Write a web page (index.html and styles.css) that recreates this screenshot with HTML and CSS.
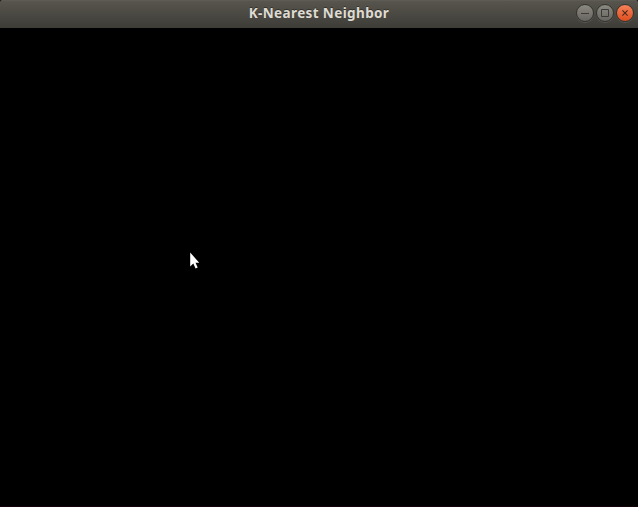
FILE: index.html
```html
<!DOCTYPE html>
<html lang="en">
<head>
<meta charset="utf-8">
<title>K-Nearest Neighbor</title>
<link rel="stylesheet" href="styles.css">
</head>
<body>
<main class="window">
  <header class="titlebar">
    <h1 class="title">K-Nearest Neighbor</h1>
    <div class="controls">
      <button class="control" aria-label="Minimize"><svg viewBox="0 0 16 16"><path d="M4 8.5h8"/></svg></button>
      <button class="control" aria-label="Maximize"><svg viewBox="0 0 16 16"><path d="M4.5 4.5h7v7h-7z"/></svg></button>
      <button class="control close" aria-label="Close"><svg viewBox="0 0 16 16"><path d="M5.4 5.4l5.2 5.2M10.6 5.4l-5.2 5.2"/></svg></button>
    </div>
  </header>
  <section class="canvas">
    <svg class="cursor" viewBox="0 0 11 18"><path d="M.2 .5V14.4L3.3 11.6L5.6 16.5L7.7 15.5L5.5 10.8H9.2Z"/></svg>
  </section>
</main>
</body>
</html>
```
FILE: styles.css
```css
* { box-sizing: border-box; }
body { margin: 0; background: #000; overflow: hidden; }
.window { display: flex; flex-direction: column; height: 507px; }
.titlebar {
  display: grid;
  grid-template-columns: 70px 1fr 70px;
  height: 28px;
  padding-bottom: 3px;
  border-radius: 2px 2px 0 0;
  border-top: 1px solid #5d5b53;
  background: linear-gradient(#57554d, #3d3c37);
}
.title {
  grid-column: 2;
  margin: 0;
  font: 700 13.5px/25px "Noto Sans", "Open Sans", sans-serif;
  letter-spacing: 0.38px;
  text-align: center;
  color: #dfdbd2;
  text-shadow: 0 -1px 0 #33322e;
  white-space: nowrap;
}
.controls { display: flex; align-items: flex-start; padding-top: 3px; justify-content: flex-end; gap: 2px; padding-right: 4px; }
.control {
  width: 18px;
  height: 18px;
  padding: 0;
  border: 1px solid #34332f;
  border-radius: 50%;
  background: linear-gradient(#8b8981, #66655f);
  box-shadow: 0 1px 0 #59574f;
}
.control svg { display: block; width: 16px; height: 16px; fill: none; stroke: #3b3a36; stroke-width: 1; }
.close { background: linear-gradient(#f58159, #df4e1f); }
.close svg { stroke: #4a281b; stroke-width: 1.1; }
.canvas { position: relative; flex: 1; background: #000; border-bottom: 1px solid #12020c; }
.cursor { position: absolute; left: 190px; top: 224px; width: 11px; height: 18px; fill: #fff; }
```
